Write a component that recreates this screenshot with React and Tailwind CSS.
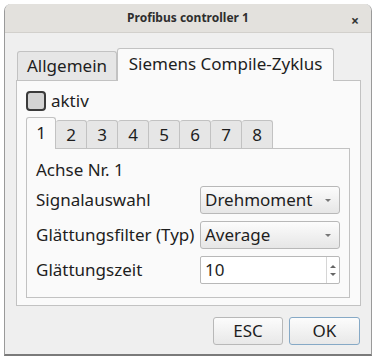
import React from 'react';

const font = { fontFamily: '"Noto Sans", "Open Sans", sans-serif' };

const Combo = ({ value }) => (
  <div className="flex h-[28px] w-[140px] items-center justify-between rounded-[3px] border border-[#b8b8b8] bg-gradient-to-b from-[#fcfcfc] to-[#e6e6e6] pl-[4px] pr-[8px] text-[17px] text-[#1e1e1e]">
    <span>{value}</span>
    <span className="h-0 w-0 border-x-[3px] border-t-[3px] border-x-transparent border-t-[#777]" />
  </div>
);

const Spin = ({ value }) => (
  <div className="flex h-[28px] w-[140px] items-stretch rounded-[2px] border border-[#b8b8b8] bg-white text-[17px] text-[#1e1e1e]">
    <div className="flex flex-1 items-center pl-[4px]">{value}</div>
    <div className="flex w-[13px] flex-col items-center justify-center gap-[5px] border-l border-[#d6d6d6]">
      <span className="h-0 w-0 border-x-[3px] border-b-[3px] border-x-transparent border-b-[#666]" />
      <span className="h-0 w-0 border-x-[3px] border-t-[3px] border-x-transparent border-t-[#666]" />
    </div>
  </div>
);

export default function App() {
  const tabs = ['1', '2', '3', '4', '5', '6', '7', '8'];
  return (
    <div className="h-[361px] w-[376px] bg-white pt-[4px] pl-[4px] pr-[4px]" style={font}>
      <div className="flex h-[352px] flex-col overflow-hidden rounded-t-[7px] border-x border-b-2 border-x-[#9a9a9a] border-b-[#7a7a7a] bg-[#efefef]">
        {/* title bar */}
        <div className="relative flex h-[29px] shrink-0 items-center justify-center border-b border-[#d2d0cc] bg-[#e3e1dd]">
          <span className="text-[12px] font-bold text-[#2e2e2e]">Profibus controller 1</span>
          <span className="absolute right-[12px] top-[6px] text-[14px] font-bold text-[#333]">×</span>
        </div>

        <div className="flex flex-1 flex-col px-[11px] pt-[15px]">
          {/* outer tabs */}
          <div className="flex h-[32px] items-end">
            <div className="ml-[1px] flex h-[29px] w-[100px] items-center justify-center rounded-t-[3px] border border-b-0 border-[#c2c2c2] bg-[#e6e6e6] text-[17px] text-[#1e1e1e]">
              Allgemein
            </div>
            <div className="relative -mb-[1px] flex h-[33px] w-[217px] items-center justify-center rounded-t-[3px] border border-b-0 border-[#c2c2c2] bg-[#fafafa] pb-[2px] text-[17px] text-[#1e1e1e]">
              Siemens Compile-Zyklus
            </div>
          </div>

          {/* outer pane */}
          <div className="flex h-[226px] w-[345px] flex-col border border-[#c2c2c2] bg-[#fafafa] pl-[9px] pt-[9px]">
            <div className="flex h-[21px] items-center gap-[5px]">
              <span className="h-[20px] w-[20px] rounded-[4px] border-2 border-[#3a3a3a] bg-[#d3d3d3]" />
              <span className="text-[17px] leading-none text-[#1e1e1e]">aktiv</span>
            </div>

            {/* inner tabs */}
            <div className="mt-[6px] flex h-[31px] items-end">
              {tabs.map((t, i) => (
                <div
                  key={t}
                  className={
                    i === 0
                      ? 'relative -mb-[1px] flex h-[32px] w-[30px] items-center justify-center rounded-t-[3px] border border-b-0 border-[#c2c2c2] bg-[#fafafa] pb-[2px] text-[17px] text-[#1e1e1e]'
                      : 'flex h-[28px] w-[31px] items-center justify-center rounded-t-[3px] border border-b-0 border-l-0 border-[#c2c2c2] bg-[#e6e6e6] text-[17px] text-[#1e1e1e]'
                  }
                >
                  {t}
                </div>
              ))}
            </div>

            {/* inner pane */}
            <div className="flex h-[150px] w-[324px] flex-col border border-[#c2c2c2] bg-[#fafafa] px-[9px] pt-[9px]">
              <div className="h-[24px] text-[17px] leading-[24px] text-[#1e1e1e]">Achse Nr. 1</div>
              <div className="mt-[4px] flex flex-col gap-[7px]">
                <div className="flex items-center justify-between">
                  <span className="text-[17px] text-[#1e1e1e]">Signalauswahl</span>
                  <Combo value="Drehmoment" />
                </div>
                <div className="flex items-center justify-between">
                  <span className="text-[17px] text-[#1e1e1e]">Glättungsfilter (Typ)</span>
                  <Combo value="Average" />
                </div>
                <div className="flex items-center justify-between">
                  <span className="text-[17px] text-[#1e1e1e]">Glättungszeit</span>
                  <Spin value="10" />
                </div>
              </div>
            </div>
          </div>

          {/* buttons */}
          <div className="mt-[11px] flex justify-end gap-[6px]">
            <div className="flex h-[28px] w-[70px] items-center justify-center rounded-[3px] border border-[#b8b8b8] bg-gradient-to-b from-[#fcfcfc] to-[#e8e8e8] text-[17px] text-[#1e1e1e]">
              ESC
            </div>
            <div className="flex h-[28px] w-[71px] items-center justify-center rounded-[3px] border border-[#86a9c6] bg-gradient-to-b from-[#fcfcfc] to-[#e8e8e8] text-[17px] text-[#1e1e1e]">
              OK
            </div>
          </div>
        </div>
      </div>
    </div>
  );
}
